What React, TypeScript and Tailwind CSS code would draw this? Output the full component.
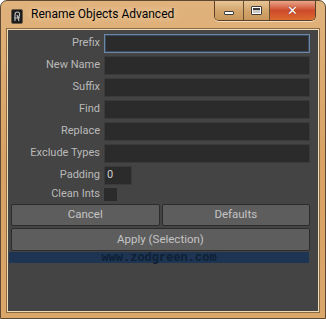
import React from "react";

const fields = ["Prefix", "New Name", "Suffix", "Find", "Replace", "Exclude Types"];

const TitleIcon = () => (
  <svg width="12" height="15" viewBox="0 0 12 15">
    <rect x="0.5" y="0.5" width="11" height="14" rx="1.5" fill="#1b1b1b" stroke="#6b5a44" />
    <path d="M4 12 L4 6 Q4 3 6.5 3 Q9 3 8.5 6 L7.5 9 M6 6 L8 12 M3 9 L9 9" stroke="#b9b9b9" strokeWidth="1.2" fill="none" />
  </svg>
);

const WindowButtons = () => (
  <div className="flex h-[20px] overflow-hidden rounded-b-[5px] border border-t-0 border-[#5a4128] shadow-[0_1px_0_rgba(255,240,210,0.7)]">
    <div className="flex w-[29px] items-center justify-center border-r border-[#6a5032] bg-gradient-to-b from-[#e7c597] via-[#d3a66d] to-[#c8965a]">
      <div className="mt-[5px] h-[4px] w-[10px] rounded-[1px] border border-[#3d3d3d] bg-white" />
    </div>
    <div className="flex w-[26px] items-center justify-center border-r border-[#6a5032] bg-gradient-to-b from-[#e7c597] via-[#d3a66d] to-[#c8965a]">
      <div className="h-[9px] w-[11px] rounded-[1px] border border-[#3d3d3d] bg-white p-[1px]">
        <div className="h-full w-full border-t-2 border-[#3d3d3d] bg-[#c9c9c9]" />
      </div>
    </div>
    <div className="flex w-[45px] items-center justify-center bg-gradient-to-b from-[#eaa58a] via-[#cc4a2a] to-[#dd6a30]">
      <span className="font-['DejaVu_Sans',sans-serif] text-[13px] leading-none font-bold text-white [text-shadow:0_0_1px_#5a1a10]">
        ✕
      </span>
    </div>
  </div>
);

export default function App() {
  return (
    <div className="flex h-[319px] w-[326px] flex-col rounded-t-[7px] border border-[#5e4a33] bg-gradient-to-b from-[#e0b27c] via-[#d8a264] to-[#dba66a] font-['Roboto',sans-serif]">
      <div className="flex h-[28px] shrink-0 items-start">
        <div className="mt-[8px] ml-[10px]">
          <TitleIcon />
        </div>
        <span className="mt-[7px] ml-[8px] text-[12px] leading-none text-black [text-shadow:0_0_6px_#f7e6cc]">
          Rename Objects Advanced
        </span>
        <div className="ml-auto mr-[9px]">
          <WindowButtons />
        </div>
      </div>
      <div className="mx-[6px] mb-[6px] flex flex-1 flex-col border border-[#f1dbb5] bg-[#444444] shadow-[0_0_0_1px_#8a6a44]">
        <div className="flex flex-col gap-[3px] pt-[4px] pr-[8px] text-[11px] text-[#bababa]">
          {fields.map((f, i) => (
            <div key={f} className="flex h-[19px] items-center">
              <span className="w-[96px] pr-[4px] text-right">{f}</span>
              <div
                className={
                  "h-[19px] flex-1 " +
                  (i === 0
                    ? "border border-[#6a87a8] bg-[#2b2b2b] shadow-[inset_0_0_0_1px_#3b4a5c]"
                    : "border border-[#3a3a3a] bg-[#2b2b2b]")
                }
              />
            </div>
          ))}
          <div className="flex h-[19px] items-center">
            <span className="w-[96px] pr-[4px] text-right">Padding</span>
            <div className="flex h-[19px] w-[28px] items-center border border-[#3a3a3a] bg-[#2b2b2b] pl-[2px] text-[#d0d0d0]">
              0
            </div>
          </div>
          <div className="-mt-[1px] flex h-[14px] items-center">
            <span className="w-[96px] pr-[4px] text-right">Clean Ints</span>
            <div className="h-[13px] w-[13px] bg-[#2b2b2b]" />
          </div>
        </div>
        <div className="mt-[3px] flex flex-col gap-[2px] pr-[8px] pl-[3px] text-[11.5px] text-[#c4c4c4]">
          <div className="flex gap-[2px]">
            <button className="h-[22px] flex-1 rounded-[2px] border border-[#2c2c2c] bg-[#5d5d5d]">Cancel</button>
            <button className="h-[22px] flex-1 rounded-[2px] border border-[#2c2c2c] bg-[#5d5d5d]">Defaults</button>
          </div>
          <button className="h-[23px] rounded-[2px] border border-[#2c2c2c] bg-[#5d5d5d]">Apply (Selection)</button>
        </div>
        <div className="mt-[1px] mr-[9px] ml-[1px] flex h-[11px] items-center justify-center bg-[#1d3552] font-['Liberation_Mono',monospace] text-[12px] leading-none font-bold text-[#0e1f35]">
          www.zodgreen.com
        </div>
      </div>
    </div>
  );
}
